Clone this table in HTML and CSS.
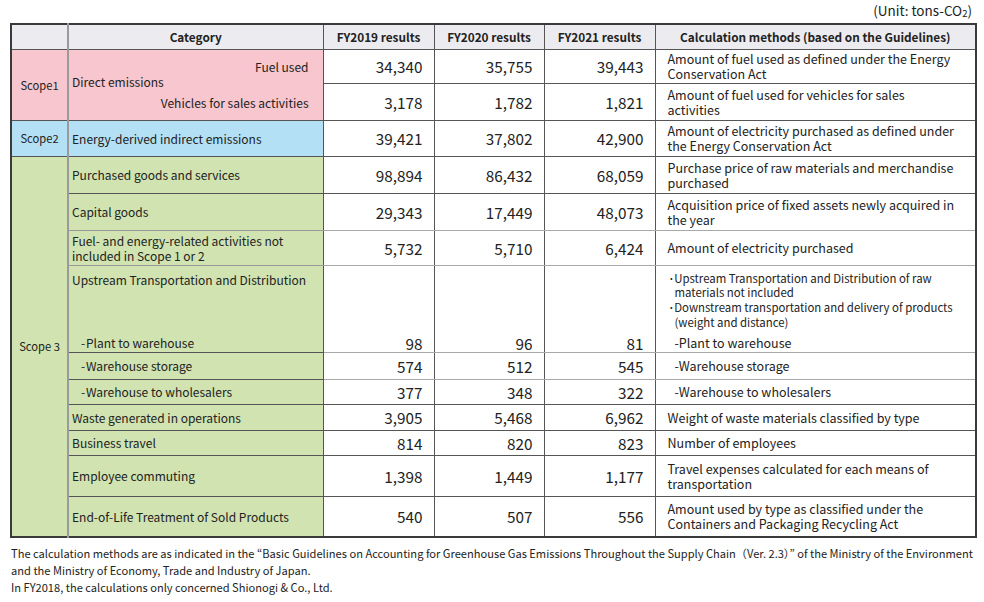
FILE: index.html
```html
<!DOCTYPE html>
<html lang="en">
<head>
<meta charset="utf-8">
<title>Scope 1, 2, 3 emissions</title>
<link rel="stylesheet" href="styles.css">
</head>
<body>
<div class="page">
  <div class="unit">(Unit: tons-CO<span class="sub">2</span>)</div>
  <table class="ghg">
    <colgroup>
      <col class="c-scope">
      <col class="c-cat">
      <col class="c-val">
      <col class="c-val2">
      <col class="c-val">
      <col class="c-calc">
    </colgroup>
    <thead>
      <tr class="r-head">
        <th class="scope-col"></th>
        <th class="cat">Category</th>
        <th>FY2019 results</th>
        <th>FY2020 results</th>
        <th>FY2021 results</th>
        <th>Calculation methods (based on the Guidelines)</th>
      </tr>
    </thead>
    <tbody>
      <tr class="r1a">
        <td class="scope scope1" rowspan="2">Scope1</td>
        <td class="cat scope1 cat-s1" rowspan="2">
          <div class="right">Fuel used</div>
          <div>Direct emissions</div>
          <div class="right gap">Vehicles for sales activities</div>
        </td>
        <td class="val">34,340</td>
        <td class="val">35,755</td>
        <td class="val">39,443</td>
        <td class="calc">Amount of fuel used as defined under the Energy Conservation Act</td>
      </tr>
      <tr class="r1b">
        <td class="val">3,178</td>
        <td class="val">1,782</td>
        <td class="val">1,821</td>
        <td class="calc">Amount of fuel used for vehicles for sales activities</td>
      </tr>
      <tr class="r2">
        <td class="scope scope2">Scope2</td>
        <td class="cat scope2">Energy-derived indirect emissions</td>
        <td class="val">39,421</td>
        <td class="val">37,802</td>
        <td class="val">42,900</td>
        <td class="calc">Amount of electricity purchased as defined under the Energy Conservation Act</td>
      </tr>
      <tr class="r3a">
        <td class="scope scope3" rowspan="13">Scope 3</td>
        <td class="cat scope3">Purchased goods and services</td>
        <td class="val">98,894</td>
        <td class="val">86,432</td>
        <td class="val">68,059</td>
        <td class="calc">Purchase price of raw materials and merchandise purchased</td>
      </tr>
      <tr class="r3b">
        <td class="cat scope3 cat-mid">Capital goods</td>
        <td class="val light-b">29,343</td>
        <td class="val light-b">17,449</td>
        <td class="val light-b">48,073</td>
        <td class="calc light-b">Acquisition price of fixed assets newly acquired in the year</td>
      </tr>
      <tr class="r3c">
        <td class="cat scope3 cat-mid">Fuel- and energy-related activities not included in Scope 1 or 2</td>
        <td class="val light-b">5,732</td>
        <td class="val light-b">5,710</td>
        <td class="val light-b">6,424</td>
        <td class="calc light-b">Amount of electricity purchased</td>
      </tr>
      <tr class="r3d">
        <td class="cat scope3 cat-top no-b">
          <div>Upstream Transportation and Distribution</div>
          <div class="sub-item first">-&#8202;Plant to warehouse</div>
        </td>
        <td class="val val-bottom light-b">98</td>
        <td class="val val-bottom light-b">96</td>
        <td class="val val-bottom light-b">81</td>
        <td class="calc calc-top light-b">
          <div class="bl">･Upstream Transportation and Distribution of raw materials not included</div>
          <div class="bl">･Downstream transportation and delivery of products (weight and distance)</div>
          <div class="calc-sub first">-Plant to warehouse</div>
        </td>
      </tr>
      <tr class="r3e">
        <td class="cat scope3 no-b"><div class="sub-item">-&#8202;Warehouse storage</div></td>
        <td class="val light-b">574</td>
        <td class="val light-b">512</td>
        <td class="val light-b">545</td>
        <td class="calc light-b"><div class="calc-sub">-Warehouse storage</div></td>
      </tr>
      <tr class="r3f">
        <td class="cat scope3"><div class="sub-item">-&#8202;Warehouse to wholesalers</div></td>
        <td class="val">377</td>
        <td class="val">348</td>
        <td class="val">322</td>
        <td class="calc"><div class="calc-sub">-Warehouse to wholesalers</div></td>
      </tr>
      <tr class="r3g">
        <td class="cat scope3">Waste generated in operations</td>
        <td class="val">3,905</td>
        <td class="val">5,468</td>
        <td class="val">6,962</td>
        <td class="calc">Weight of waste materials classified by type</td>
      </tr>
      <tr class="r3h">
        <td class="cat scope3">Business travel</td>
        <td class="val">814</td>
        <td class="val">820</td>
        <td class="val">823</td>
        <td class="calc">Number of employees</td>
      </tr>
      <tr class="r3i">
        <td class="cat scope3">Employee commuting</td>
        <td class="val">1,398</td>
        <td class="val">1,449</td>
        <td class="val">1,177</td>
        <td class="calc">Travel expenses calculated for each means of transportation</td>
      </tr>
      <tr class="r3j">
        <td class="cat scope3">End-of-Life Treatment of Sold Products</td>
        <td class="val">540</td>
        <td class="val">507</td>
        <td class="val">556</td>
        <td class="calc">Amount used by type as classified under the Containers and Packaging Recycling Act</td>
      </tr>
    </tbody>
  </table>
  <div class="notes">
    <p>The calculation methods are as indicated in the “Basic Guidelines on Accounting for Greenhouse Gas Emissions Throughout the Supply Chain（Ver. 2.3）” of the Ministry of the Environment and the Ministry of Economy, Trade and Industry of Japan.</p>
    <p>In FY2018, the calculations only concerned Shionogi &amp; Co., Ltd.</p>
  </div>
</div>
</body>
</html>
```

FILE: styles.css
```css
* { box-sizing: border-box; }

html, body {
  margin: 0;
  padding: 0;
  background: #ffffff;
}

body {
  font-family: "Noto Sans CJK JP", "Noto Sans", sans-serif;
  color: #222222;
}

.page {
  width: 984px;
  padding: 0 9px 0 10px;
}

.unit {
  text-align: right;
  font-size: 13.5px;
  line-height: 16px;
  padding-top: 2px;
  height: 23px;
  padding-right: 3px;
}

.unit .sub {
  font-size: 9.5px;
  vertical-align: -1px;
}

.ghg {
  width: 965px;
  border-collapse: collapse;
  table-layout: fixed;
  border: 2px solid #3a3a3a;
}

.c-scope { width: 57px; }
.c-cat { width: 255px; }
.c-val { width: 111px; }
.c-val2 { width: 110px; }
.c-calc { width: 321px; }

.ghg th,
.ghg td {
  border: 1px solid #555555;
  padding: 0;
  vertical-align: middle;
}

.ghg th {
  background: #ececf0;
  font-size: 11.8px;
  font-weight: 700;
  line-height: 16px;
  text-align: center;
}

.ghg .scope-col,
.ghg .scope {
  border-right: 2px solid #9a9a9a;
}

.ghg .scope {
  font-size: 11.2px;
  text-align: center;
  line-height: 16px;
}

.scope1 { background: #f7c6ce; }
.scope2 { background: #b3e0f5; }
.scope3 { background: #d0e3b1; }

.ghg .cat {
  font-size: 12px;
  line-height: 15px;
  padding-left: 3px;
  padding-right: 6px;
}

.ghg th.cat {
  padding: 0;
  font-size: 11.8px;
}

.ghg .cat-s1 {
  vertical-align: top;
  padding-top: 9px;
  padding-right: 14px;
}

.cat-s1 .right { text-align: right; }
.cat-s1 .gap { margin-top: 6px; }

.ghg .cat-mid { border-bottom-color: #9a9a9a; }

.ghg .cat-top {
  vertical-align: top;
  padding-top: 6px;
}

.ghg .no-b { border-bottom: none; }

.sub-item { padding-left: 9px; }
.sub-item.first { margin-top: 48px; }

.ghg .val {
  text-align: right;
  font-size: 15.3px;
  line-height: 18px;
  padding-right: 11px;
}

.ghg .val-bottom {
  vertical-align: bottom;
  padding-bottom: 0;
}

.ghg .calc {
  font-size: 12.5px;
  line-height: 15px;
  padding-left: 12px;
  padding-right: 17px;
}

.ghg .calc-top {
  vertical-align: top;
  padding-top: 5px;
}

.bl {
  font-size: 11.4px;
  line-height: 14.8px;
  padding-left: 7px;
  text-indent: -6px;
}

.calc-sub { padding-left: 7px; }
.calc-sub.first { margin-top: 5px; }

.ghg .light-b { border-bottom-color: #a8a8a8; }

.r-head { height: 25px; }
.r1a { height: 34px; }
.r1b { height: 37px; }
.r2 { height: 36px; }
.r3a { height: 37px; }
.r3b { height: 37px; }
.r3c { height: 35px; }
.r3d { height: 87px; }
.r3e { height: 27px; }
.r3f { height: 25px; }
.r3g { height: 26px; }
.r3h { height: 25px; }
.r3i { height: 41px; }
.r3j { height: 41px; }

.notes {
  margin-top: 7px;
  font-size: 11.1px;
  line-height: 17px;
  padding-left: 1px;
}

.notes p { margin: 0; }
```
